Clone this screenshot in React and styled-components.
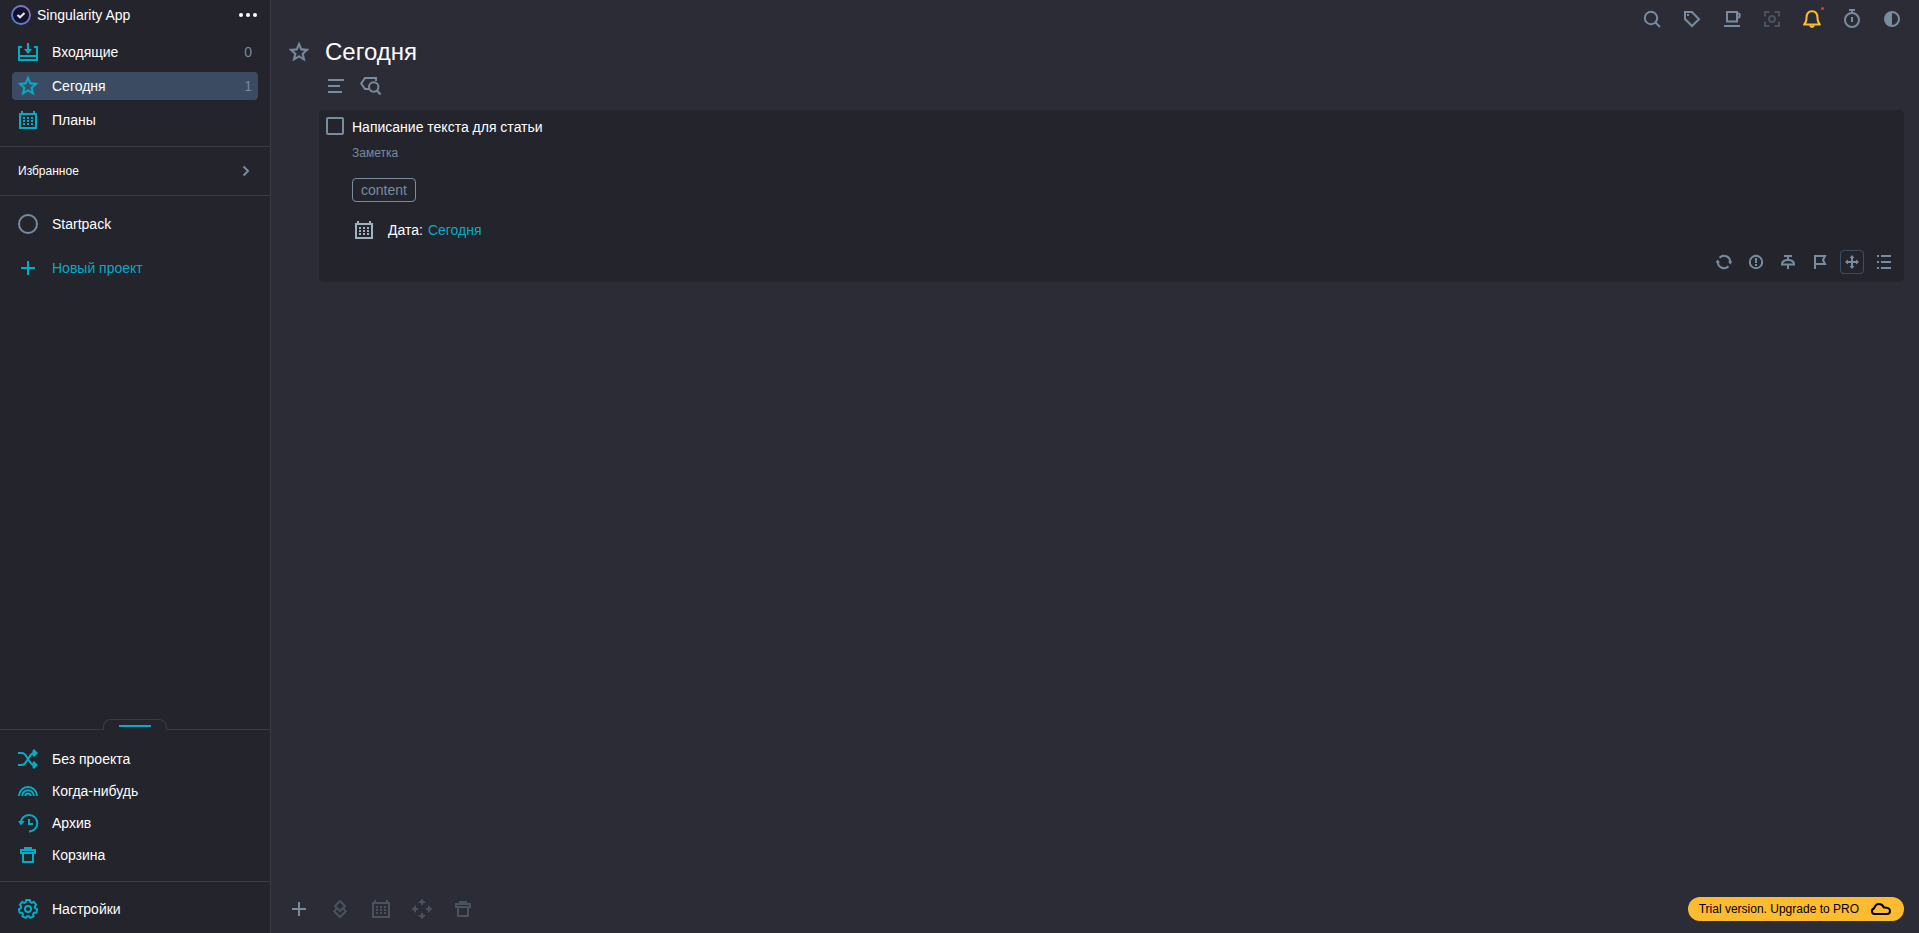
import { useState } from "react";
import styled, { createGlobalStyle, css } from "styled-components";

const color = {
  side: "#24242c",
  main: "#2c2c37",
  line: "#3b3b47",
  accent: "#04acc5",
  muted: "#788c9f",
  dim: "#49535f",
  active: "#3b4b61",
  yellow: "#fdbc30",
};

const STAR =
  "M22 9.24l-7.19-.62L12 2 9.19 8.63 2 9.24l5.46 4.73L5.82 21 12 17.27 18.18 21l-1.63-7.03L22 9.24zM12 15.4l-3.76 2.27 1-4.28-3.32-2.88 4.38-.38L12 6.1l1.71 4.04 4.38.38-3.32 2.88 1 4.28L12 15.4z";

// seven rounded teeth around the centre
const gearPath = () => {
  const pts = [];
  for (let i = 0; i < 7; i++) {
    [[-12, 9.2], [12, 9.2], [18, 7.2], [33, 7.2]].forEach(([shift, r]) => {
      const a = (((i * 360) / 7 + shift - 90) * Math.PI) / 180;
      pts.push(`${(12 + r * Math.cos(a)).toFixed(2)} ${(12 + r * Math.sin(a)).toFixed(2)}`);
    });
  }
  return `M${pts.join("L")}Z`;
};

const icons = {
  inbox: (
    <>
      <path d="M6 7H3v13h18V7h-3M3 16h18M12 3v9" />
      <path d="M8 9h8l-4 5z" fill="currentColor" stroke="none" />
    </>
  ),
  star: <path d={STAR} fill="currentColor" strokeWidth="0.5" />,
  calendar: (
    <>
      <path d="M4 6h16v14H4zM6 3v3M18 3v3" />
      <path
        d="M7 9h2v2H7zM11 9h2v2h-2zM15 9h2v2h-2zM7 12h2v2H7zM11 12h2v2h-2zM15 12h2v2h-2zM7 15h2v2H7zM11 15h2v2h-2zM15 15h2v2h-2z"
        fill="currentColor"
        stroke="none"
      />
    </>
  ),
  chevron: <path d="M9.5 7.5 14 12l-4.5 4.5" />,
  circle: <circle cx="12" cy="12" r="9" />,
  plus: <path d="M12 5v14M5 12h14" />,
  shuffle: (
    <>
      <path d="M2 6h4c3 0 4 3 6 6s3 6 6 6h1M2 18h4c3 0 4-3 6-6s3-6 6-6h1" />
      <path d="m18 2 4 4-4 4-1.5-1.5v-5zM18 14l4 4-4 4-1.5-1.5v-5z" fill="currentColor" stroke="none" />
    </>
  ),
  rainbow: (
    <path d="M3 17a9 9 0 0 1 18 0M6.2 17a5.8 5.8 0 0 1 11.6 0M9.4 17a2.6 2.6 0 0 1 5.2 0" />
  ),
  history: (
    <>
      <path d="M4.7 12a8.3 8.3 0 1 1 8.3 8.500M13 8v5h4" />
      <path d="M2 10h6.5L5 14.5z" fill="currentColor" stroke="none" />
    </>
  ),
  trash: <path d="M5 7h14v3H5zM9 7V5h6v2M7 10v9h10v-9" />,
  gear: (
    <>
      <path d={gearPath()} strokeLinejoin="round" />
      <circle cx="12" cy="12" r="3" />
    </>
  ),
  search: (
    <>
      <circle cx="11" cy="11" r="6.2" />
      <path d="m15.5 15.5 4.5 4.5" />
    </>
  ),
  tag: (
    <>
      <path d="M5 5h7l7 7.3-7 6.7-7-7z" />
      <path d="M7 7h2v2H7z" fill="currentColor" stroke="none" />
    </>
  ),
  cup: <path d="M7 5h10v9.5H7zM17 6.5h1.5q1.2 0 1.2 1.2v1.6q0 1.2-1.2 1.2H17M4 19h16" />,
  focus: (
    <>
      <path d="M5 9.5V5h4.5M14.5 5H19v4.5M19 14.5V19h-4.5M9.5 19H5v-4.5" />
      <circle cx="12" cy="12" r="3" />
    </>
  ),
  bell: (
    <path
      d="M4 17.5c2-1.5 2.5-3 2.5-6.5C6.5 7 8.5 4.2 12 4.2s5.5 2.8 5.5 6.800c0 3.5.5 5 2.5 6.500zM10 18.500q2 3 4 0"
      strokeLinejoin="round"
    />
  ),
  timer: (
    <>
      <circle cx="12" cy="13" r="7" />
      <path d="M9 3h6M12 3v3M12 10v5" />
    </>
  ),
  contrast: (
    <>
      <circle cx="12" cy="12" r="7" />
      <path d="M12 5a7 7 0 0 0 0 14z" fill="currentColor" stroke="none" />
    </>
  ),
  lines: <path d="M4 6h16M4 12h12M4 18h14" />,
  tagSearch: (
    <>
      <path d="M10 15H6L2.2 9.5 6 4h11v3" />
      <circle cx="14.7" cy="13" r="4.7" />
      <path d="m18 16.5 3.5 4" />
    </>
  ),
  repeat: (
    <>
      <path d="M7.5 7.7A6.2 6.2 0 0 1 18.2 12M16.5 16.3A6.2 6.2 0 0 1 5.8 12" />
      <path d="M16 11.5h4.5l-2.3 3zM3.5 12.5H8l-2.3-3z" fill="currentColor" stroke="none" />
    </>
  ),
  alert: (
    <>
      <circle cx="12" cy="12" r="6.2" />
      <path d="M12 8v5M12 14v2" />
    </>
  ),
  pin: <path d="M8 6h8M12 6v4M6 14.500q0-4.500 6-4.500t6 4.500zM12 14v5" />,
  flag: <path d="M7 19V6h10l-2 4 2 4H7" />,
  move: (
    <>
      <path d="M12 6v12M6 12h12" />
      <path
        d="m12 5 2.500 3h-5zM12 19l2.500-3h-5zM5 12l3-2.500v5zM19 12l-3-2.500v5z"
        fill="currentColor"
        stroke="none"
      />
    </>
  ),
  list: <path d="M5 6h2M9 6h10M5 12h2M9 12h10M5 18h2M9 18h10" />,
  layers: <path d="m12 4 5 5-5 5-5-5zM8.500 11.500l-2.300 3L12 20l5.800-5.500-2.300-3" />,
  spread: (
    <path
      d="m12 2 4 4h-3v2h-2V6H8zM12 22l4-4h-3v-2h-2v2H8zM2 12l4-4v3h2v2H6v3zM22 12l-4-4v3h-2v2h2v3z"
      fill="currentColor"
      stroke="none"
    />
  ),
  cloud: (
    <path
      d="M5.500 17a2.800 2.800 0 0 1-.5-5.500C6 8.500 7.500 7 10 7s4 1.500 4.700 3.500c3.300-.5 6.300 1 6.300 3.500 0 2-1 3-3 3z"
      strokeLinejoin="round"
    />
  ),
};

const Icon = ({ name, tone }) => (
  <Svg viewBox="0 0 24 24" $tone={tone} aria-hidden="true">
    {icons[name]}
  </Svg>
);

const Logo = () => (
  <LogoSvg viewBox="0 0 20 20" aria-hidden="true">
    <defs>
      <linearGradient id="ring" x1="0" y1="1" x2="1" y2="0">
        <stop offset="0" stopColor="#3f86d8" />
        <stop offset="1" stopColor="#a06cc8" />
      </linearGradient>
    </defs>
    <circle cx="10" cy="10" r="9" fill="#11132a" stroke="url(#ring)" strokeWidth="1.8" />
    <path d="m6.5 10 2.5 2.3L13.500 8" fill="none" stroke="#f3dcf0" strokeWidth="2.2" />
  </LogoSvg>
);

const mainItems = [
  { icon: "inbox", label: "Входящие", count: 0 },
  { icon: "star", label: "Сегодня", count: 1 },
  { icon: "calendar", label: "Планы" },
];

const extraItems = [
  { icon: "shuffle", label: "Без проекта" },
  { icon: "rainbow", label: "Когда-нибудь" },
  { icon: "history", label: "Архив" },
  { icon: "trash", label: "Корзина" },
];

const topActions = [
  { icon: "search", label: "Поиск" },
  { icon: "tag", label: "Теги" },
  { icon: "cup", label: "Перерыв" },
  { icon: "focus", label: "Фокус", tone: "dim" },
  { icon: "bell", label: "Уведомления", tone: "yellow" },
  { icon: "timer", label: "Таймер" },
  { icon: "contrast", label: "Тема" },
];

const taskActions = [
  { icon: "repeat", label: "Повтор" },
  { icon: "alert", label: "Приоритет" },
  { icon: "pin", label: "Закрепить" },
  { icon: "flag", label: "Срок" },
  { icon: "move", label: "Переместить", framed: true },
  { icon: "list", label: "Чек-лист" },
];

const bottomActions = [
  { icon: "plus", label: "Добавить" },
  { icon: "layers", label: "Группа", tone: "dim" },
  { icon: "calendar", label: "Дата", tone: "dim" },
  { icon: "spread", label: "Перенести", tone: "dim" },
  { icon: "trash", label: "Удалить", tone: "dim" },
];

const Sidebar = () => {
  const [current, setCurrent] = useState("Сегодня");

  return (
    <Side>
      <Brand>
        <Logo />
        <BrandName>Singularity App</BrandName>
        <DotsButton aria-label="Меню">
          <Dot />
          <Dot />
          <Dot />
        </DotsButton>
      </Brand>
      <Nav $gap={6}>
        {mainItems.map(({ icon, label, count }) => (
          <NavRow
            key={label}
            $active={label === current}
            onClick={() => setCurrent(label)}
          >
            <Icon name={icon} tone="accent" />
            <NavLabel>{label}</NavLabel>
            {count !== undefined && <Count>{count}</Count>}
          </NavRow>
        ))}
      </Nav>
      <Favorites>
        Избранное
        <Icon name="chevron" />
      </Favorites>
      <Projects>
        <NavRow>
          <Icon name="circle" />
          <NavLabel>Startpack</NavLabel>
        </NavRow>
        <NavRow>
          <Icon name="plus" tone="accent" />
          <NavLabel $accent>Новый проект</NavLabel>
        </NavRow>
      </Projects>
      <Extra>
        <Handle aria-label="Свернуть" />
        <Nav $gap={4}>
          {extraItems.map(({ icon, label }) => (
            <NavRow key={label}>
              <Icon name={icon} tone="accent" />
              <NavLabel>{label}</NavLabel>
            </NavRow>
          ))}
        </Nav>
      </Extra>
      <Settings>
        <NavRow>
          <Icon name="gear" tone="accent" />
          <NavLabel>Настройки</NavLabel>
        </NavRow>
      </Settings>
    </Side>
  );
};

const Task = () => {
  const [done, setDone] = useState(false);

  return (
    <Card>
      <TaskTitle>
        <Check type="checkbox" checked={done} onChange={() => setDone((p) => !p)} />
        Написание текста для статьи
      </TaskTitle>
      <Details>
        <Note>Заметка</Note>
        <Tag>content</Tag>
        <DateRow>
          <Icon name="calendar" tone="light" />
          <DateText>
            <span>Дата:</span>
            <DateLink href="#today">Сегодня</DateLink>
          </DateText>
        </DateRow>
      </Details>
      <TaskActions>
        {taskActions.map(({ icon, label, framed }) => (
          <IconButton key={label} aria-label={label} $framed={framed}>
            <Icon name={icon} />
          </IconButton>
        ))}
      </TaskActions>
    </Card>
  );
};

const App = () => (
  <>
    <GlobalStyle />
    <Layout>
      <Sidebar />
      <Main>
        <TopBar>
          {topActions.map(({ icon, label, tone }) => (
            <IconButton key={label} aria-label={label}>
              <Icon name={icon} tone={tone} />
              {icon === "bell" && <Badge />}
            </IconButton>
          ))}
        </TopBar>
        <Heading>
          <Icon name="star" />
          <Title>Сегодня</Title>
        </Heading>
        <Filters>
          <IconButton aria-label="Сортировка">
            <Icon name="lines" />
          </IconButton>
          <IconButton aria-label="Фильтр по тегам">
            <Icon name="tagSearch" />
          </IconButton>
        </Filters>
        <Task />
        <BottomBar>
          <BottomActions>
            {bottomActions.map(({ icon, label, tone }) => (
              <IconButton key={label} aria-label={label}>
                <Icon name={icon} tone={tone} />
              </IconButton>
            ))}
          </BottomActions>
          <Upgrade>
            Trial version. Upgrade to PRO
            <Icon name="cloud" tone="dark" />
          </Upgrade>
        </BottomBar>
      </Main>
    </Layout>
  </>
);

const GlobalStyle = createGlobalStyle`
  * {
    box-sizing: border-box;
  }

  body {
    margin: 0;
    background: ${color.main};
    color: #fff;
    font: 14px/20px "Liberation Sans", Arial, sans-serif;
  }

  button {
    margin: 0;
    padding: 0;
    border: 0;
    background: none;
    color: inherit;
    font: inherit;
    cursor: pointer;
  }
`;

const tones = {
  accent: color.accent,
  dim: color.dim,
  yellow: color.yellow,
  light: "#a3b1bd",
  dark: "#000",
};

const Svg = styled.svg`
  display: block;
  flex: none;
  width: 24px;
  height: 24px;
  fill: none;
  stroke: currentColor;
  stroke-width: 2;
  color: ${({ $tone }) => tones[$tone] || color.muted};
`;

const LogoSvg = styled.svg`
  width: 20px;
  height: 20px;
`;

const Layout = styled.div`
  display: flex;
  min-height: 100vh;
`;

const Side = styled.aside`
  display: flex;
  flex-direction: column;
  flex: none;
  width: 271px;
  background: ${color.side};
  border-right: 1px solid ${color.line};
`;

const Brand = styled.header`
  display: flex;
  align-items: center;
  height: 38px;
  padding: 0 13px 8px 11px;
  gap: 6px;
`;

const BrandName = styled.span`
  flex: 1;
`;

const DotsButton = styled.button`
  display: flex;
  gap: 3px;
  padding: 8px 0;
`;

const Dot = styled.span`
  width: 4px;
  height: 4px;
  border-radius: 50%;
  background: #fff;
`;

const Nav = styled.nav`
  display: flex;
  flex-direction: column;
  gap: ${({ $gap }) => $gap}px;
  padding: 0 12px 12px;
`;

const NavRow = styled.button`
  display: flex;
  align-items: center;
  gap: 12px;
  height: 28px;
  padding: 0 6px 0 4px;
  border-radius: 4px;
  text-align: left;
  ${({ $active }) =>
    $active &&
    css`
      background: ${color.active};
    `}
`;

const NavLabel = styled.span`
  flex: 1;
  color: ${({ $accent }) => ($accent ? color.accent : "#fff")};
`;

const Count = styled.span`
  color: ${color.muted};
`;

const Favorites = styled.button`
  display: flex;
  align-items: center;
  justify-content: space-between;
  height: 50px;
  padding: 0 12px 0 18px;
  border: solid ${color.line};
  border-width: 1px 0;
  font-size: 12px;
`;

const Projects = styled.div`
  display: flex;
  flex: 1;
  flex-direction: column;
  gap: 16px;
  padding: 14px 12px;
`;

const Extra = styled.div`
  position: relative;
  padding-top: 15px;
  border-top: 1px solid ${color.line};
`;

/* tab that sits on the divider */
const Handle = styled.button`
  position: absolute;
  top: -11px;
  left: 50%;
  display: flex;
  justify-content: center;
  width: 64px;
  height: 11px;
  padding-top: 5px;
  border: 1px solid ${color.line};
  border-bottom: 0;
  border-radius: 8px 8px 0 0;
  background: ${color.side};
  transform: translateX(-50%);

  &::after {
    content: "";
    width: 32px;
    height: 2px;
    background: ${color.accent};
  }
`;

const Settings = styled.div`
  display: flex;
  flex-direction: column;
  padding: 13px 12px 10px;
  border-top: 1px solid ${color.line};
`;

const Main = styled.main`
  display: flex;
  flex: 1;
  flex-direction: column;
  min-width: 0;
  padding: 0 15px 12px 16px;
`;

const IconButton = styled.button`
  position: relative;
  display: flex;
  align-items: center;
  justify-content: center;
  width: 24px;
  height: 24px;
  border-radius: 4px;
  box-shadow: ${({ $framed }) => ($framed ? `inset 0 0 0 1px ${color.active}` : "none")};
`;

const TopBar = styled.div`
  display: flex;
  justify-content: flex-end;
  gap: 16px;
  height: 36px;
  padding-top: 7px;
`;

const Badge = styled.span`
  position: absolute;
  top: 0;
  right: 0;
  width: 3px;
  height: 3px;
  border-radius: 50%;
  background: #e5393f;
`;

const Heading = styled.header`
  display: flex;
  align-items: center;
  gap: 14px;
  height: 32px;
`;

const Title = styled.h1`
  margin: 0;
  font-size: 24px;
  font-weight: 400;
  line-height: 32px;
`;

const Filters = styled.div`
  display: flex;
  gap: 11px;
  padding: 6px 37px 12px;
`;

const Card = styled.article`
  display: flex;
  flex-direction: column;
  margin-left: 32px;
  padding: 7px 8px 8px 7px;
  border-radius: 5px;
  background: ${color.side};
`;

const TaskTitle = styled.label`
  display: flex;
  align-items: flex-start;
  align-self: flex-start;
  gap: 8px;
`;

const Check = styled.input`
  appearance: none;
  width: 18px;
  height: 18px;
  margin: 0;
  border: 2px solid ${color.muted};
  border-radius: 2px;

  &:checked {
    background: ${color.accent};
  }
`;

const Details = styled.div`
  display: flex;
  flex-direction: column;
  align-items: flex-start;
  padding-left: 26px;
`;

const Note = styled.p`
  margin: 6px 0 15px;
  color: ${color.muted};
  font-size: 12px;
`;

const Tag = styled.span`
  height: 24px;
  padding: 1px 8px;
  border: 1px solid ${color.muted};
  border-radius: 4px;
  color: ${color.muted};
`;

const DateRow = styled.div`
  display: flex;
  align-items: center;
  gap: 12px;
  padding: 16px 0 8px;
`;

const DateText = styled.span`
  display: flex;
  gap: 5px;
`;

const DateLink = styled.a`
  color: ${color.accent};
  text-decoration: none;
`;

const TaskActions = styled.div`
  display: flex;
  justify-content: flex-end;
  gap: 8px;
`;

const BottomBar = styled.footer`
  display: flex;
  align-items: center;
  justify-content: space-between;
  margin-top: auto;
`;

const BottomActions = styled.div`
  display: flex;
  gap: 17px;
`;

const Upgrade = styled.button`
  display: flex;
  align-items: center;
  gap: 10px;
  height: 24px;
  padding: 0 11px;
  border-radius: 12px;
  background: ${color.yellow};
  color: #000;
  font-size: 12px;
`;

export default App;
